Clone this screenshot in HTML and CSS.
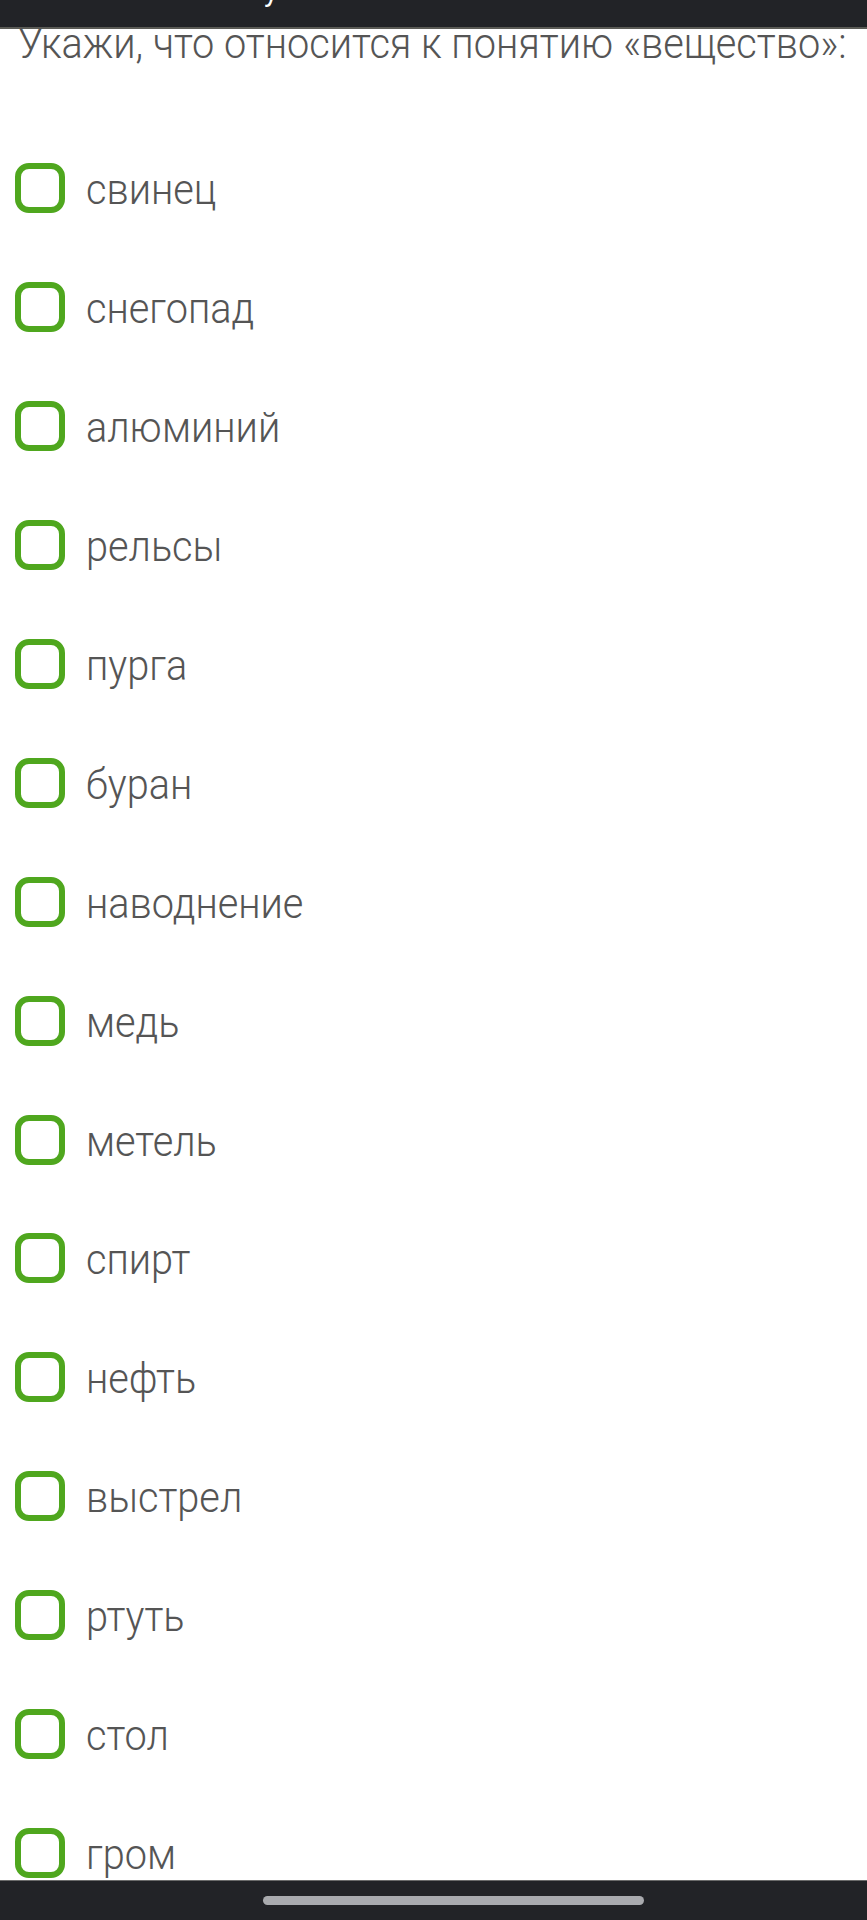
FILE: index.html
```html
<!DOCTYPE html>
<html lang="ru">
<head>
    <meta charset="UTF-8">
    <meta name="viewport" content="width=device-width, initial-scale=1.0">
    <title>Вещество</title>
    <link rel="stylesheet" href="styles.css">
</head>
<body>
    <!-- Верхняя панель -->
    <div class="top-bar"><span class="top-glyph">у</span></div>

    <h1 class="question">Укажи, что относится к понятию «вещество»:</h1>

    <ul class="options">
        <li class="option"><span class="box"></span><span class="label">свинец</span></li>
        <li class="option"><span class="box"></span><span class="label">снегопад</span></li>
        <li class="option"><span class="box"></span><span class="label">алюминий</span></li>
        <li class="option"><span class="box"></span><span class="label">рельсы</span></li>
        <li class="option"><span class="box"></span><span class="label">пурга</span></li>
        <li class="option"><span class="box"></span><span class="label">буран</span></li>
        <li class="option"><span class="box"></span><span class="label">наводнение</span></li>
        <li class="option"><span class="box"></span><span class="label">медь</span></li>
        <li class="option"><span class="box"></span><span class="label">метель</span></li>
        <li class="option"><span class="box"></span><span class="label">спирт</span></li>
        <li class="option"><span class="box"></span><span class="label">нефть</span></li>
        <li class="option"><span class="box"></span><span class="label">выстрел</span></li>
        <li class="option"><span class="box"></span><span class="label">ртуть</span></li>
        <li class="option"><span class="box"></span><span class="label">стол</span></li>
        <li class="option"><span class="box"></span><span class="label">гром</span></li>
    </ul>

    <!-- Нижняя навигационная панель -->
    <div class="nav-bar"><span class="handle"></span></div>
</body>
</html>
```
FILE: styles.css
```css
body {
    margin: 0;
    background-color: #fff;
    font-family: Roboto, "Noto Sans", sans-serif;
    overflow: hidden;
}

.top-bar {
    height: 27px;
    background-color: #222327;
    border-bottom: 2px solid #5b5b56;
    overflow: hidden;
}

.top-glyph {
    display: block;
    margin-left: 264px;
    margin-top: -24px;
    color: #fff;
    font-size: 30px;
    line-height: 30px;
}

.question {
    margin: 0;
    padding-left: 18px;
    font-size: 42px;
    font-weight: 300;
    line-height: 30px;
    color: #555;
    white-space: nowrap;
    transform: scaleX(0.945);
    transform-origin: 18px 0;
}

.options {
    list-style: none;
    margin: 0;
    padding: 70px 0 0 15px;
}

.option {
    height: 118.9px;
    display: flex;
    align-items: center;
    gap: 21px;
}

.box {
    width: 50px;
    height: 50px;
    box-sizing: border-box;
    border: 6px solid #4fa71e;
    border-radius: 14px;
    flex-shrink: 0;
}

.label {
    display: inline-block;
    font-size: 42px;
    font-weight: 300;
    color: #555;
    padding-top: 3px;
    transform: scaleX(0.945);
    transform-origin: left center;
}

.nav-bar {
    position: fixed;
    left: 0;
    right: 0;
    bottom: 0;
    height: 40px;
    background-color: #222327;
    border-top: 1px solid #6b6b6b;
    display: flex;
    padding: 15px 0 0 263px;
    box-sizing: border-box;
}

.handle {
    width: 381px;
    height: 9px;
    border-radius: 5px;
    background-color: #a9aaae;
}
```
